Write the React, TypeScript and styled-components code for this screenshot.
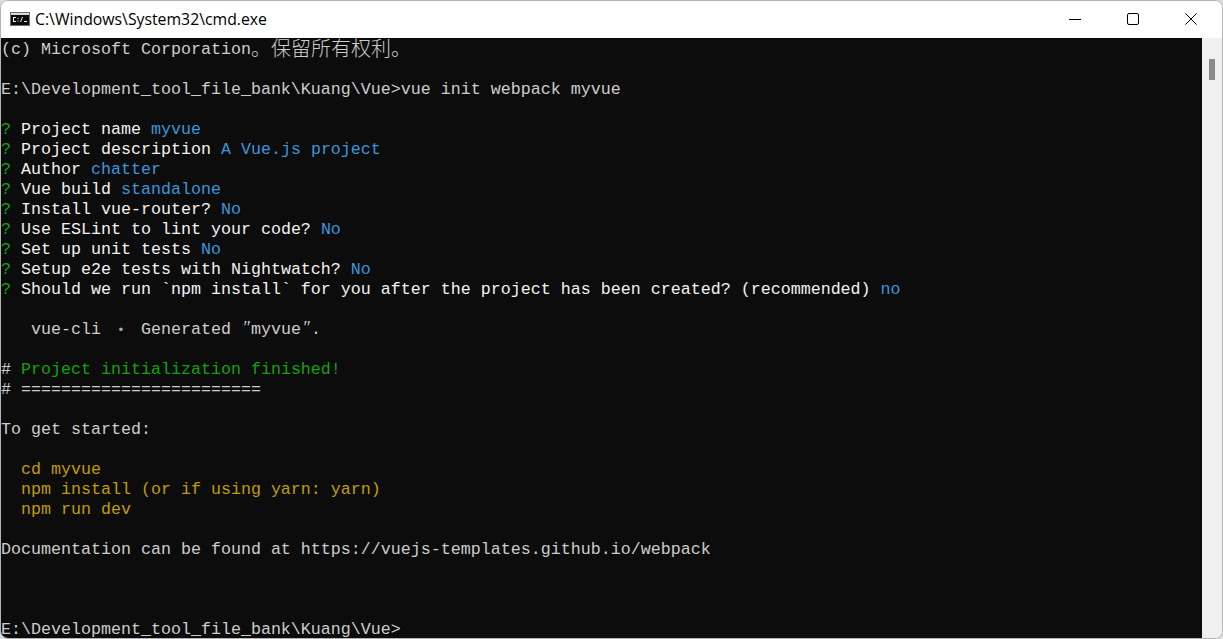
import React from "react";
import styled, { createGlobalStyle } from "styled-components";

const Global = createGlobalStyle`
  html, body { margin: 0; padding: 0; height: 100%; background: #dcdcdc; overflow: hidden; }
  #root { height: 100%; }
`;

const Window = styled.div`
  box-sizing: border-box;
  width: 1223px;
  height: 639px;
  display: flex;
  flex-direction: column;
  border: 1px solid #b4b4b4;
  border-radius: 8px;
  overflow: hidden;
  background: #fff;
`;

const TitleBar = styled.header`
  flex: 0 0 37px;
  display: flex;
  align-items: center;
  background: #fff;
  padding-left: 9px;
  padding-right: 2px;
`;

const AppIcon = styled.svg`
  width: 20px;
  height: 14px;
  flex: none;
  margin-top: -1px;
`;

const Title = styled.div`
  margin-left: 5px;
  font: 15.8px/20px "Open Sans", "Liberation Sans", sans-serif;
  color: #000;
  flex: 1;
  margin-top: -1px;
`;

const Caption = styled.button`
  width: 58px;
  height: 37px;
  padding: 0 0 1px;
  border: 0;
  background: none;
  display: flex;
  align-items: center;
  justify-content: center;
`;

const Body = styled.main`
  flex: 1;
  min-height: 0;
  display: flex;
`;

const Terminal = styled.section`
  flex: 1;
  min-width: 0;
  background: #0c0c0c;
  padding-top: 1px;
`;

const Row = styled.div`
  height: 20px;
  line-height: 22px;
  white-space: pre;
  font-family: "Liberation Mono", "Noto Sans CJK SC", monospace;
  font-size: 16.667px;
  color: #cccccc;
`;

const tones: Record<string, string> = {
  plain: "#cccccc",
  bright: "#f2f2f2",
  green: "#13a10e",
  cyan: "#3a96dd",
  yellow: "#c19c00",
};

const Seg = styled.span<{ $tone: string }>`
  color: ${(p) => tones[p.$tone]};
`;

const Cjk = styled.span`
  display: inline-block;
  height: 20px;
  margin-top: -1px;
  font-family: "Noto Sans CJK SC", sans-serif;
  font-size: 20px;
  font-weight: 300;
  line-height: 20px;
  vertical-align: top;
`;

const Bullet = styled.span`
  display: inline-block;
  width: 20px;
  line-height: 0;
  text-align: center;
  font-size: 13px;
  color: #a8a8a8;
`;

const Quote = styled.span`
  display: inline-block;
  width: 10px;
  line-height: 0;
  text-align: center;
  font-family: "Liberation Serif", serif;
  font-style: italic;
  font-size: 18px;
`;

const Scrollbar = styled.aside`
  flex: 0 0 20px;
  background: #f0f0f0;
  padding: 21px 0 0 7px;
  box-sizing: border-box;
`;

const Thumb = styled.div`
  width: 6px;
  height: 21px;
  background: #8b8b8b;
`;

type S = [string, string];
const P = (t: string): S => ["green", t];
const q = (label: string, value: string): S[] => [
  ["green", "? "],
  ["bright", label + " "],
  ["cyan", value],
];

const rows: S[][] = [
  [],
  [],
  [["plain", "E:\\Development_tool_file_bank\\Kuang\\Vue>vue init webpack myvue"]],
  [],
  q("Project name", "myvue"),
  q("Project description", "A Vue.js project"),
  q("Author", "chatter"),
  q("Vue build", "standalone"),
  q("Install vue-router?", "No"),
  q("Use ESLint to lint your code?", "No"),
  q("Set up unit tests", "No"),
  q("Setup e2e tests with Nightwatch?", "No"),
  q("Should we run `npm install` for you after the project has been created? (recommended)", "no"),
  [],
  [],
  [],
  [["plain", "# "], P("Project initialization finished!")],
  [["plain", "# ========================"]],
  [],
  [["plain", "To get started:"]],
  [],
  [["yellow", "  cd myvue"]],
  [["yellow", "  npm install (or if using yarn: yarn)"]],
  [["yellow", "  npm run dev"]],
  [],
  [["plain", "Documentation can be found at https://vuejs-templates.github.io/webpack"]],
  [],
  [],
  [],
  [["plain", "E:\\Development_tool_file_bank\\Kuang\\Vue>"]],
];

export default function App() {
  return (
    <>
      <Global />
      <Window>
        <TitleBar>
          <AppIcon viewBox="0 0 20 14">
            <rect width="20" height="14" fill="#6e6e6e" />
            <rect x="1" y="1" width="18" height="2" fill="#d8d8d8" />
            <rect x="1" y="3" width="18" height="10" fill="#0c0c0c" />
            <path d="M3 5h3v1H4v3h2v1H3zM7.500 6h1v1h-1zM7.500 8.500h1v1h-1zM10 10l2-5h1l-2 5zM14 9h3v1h-3z" fill="#f0f0f0" />
          </AppIcon>
          <Title>C:\Windows\System32\cmd.exe</Title>
          <Caption aria-label="Minimize">
            <svg width="12" height="12" viewBox="0 0 12 12"><path d="M0 6.500h12" stroke="#000" strokeWidth="1" /></svg>
          </Caption>
          <Caption aria-label="Maximize">
            <svg width="12" height="12" viewBox="0 0 12 12"><rect x=".5" y=".5" width="11" height="11" rx="1.500" fill="none" stroke="#000" /></svg>
          </Caption>
          <Caption aria-label="Close">
            <svg width="12" height="12" viewBox="0 0 12 12"><path d="M.4.400 11.600 11.600M11.600.400.4 11.600" stroke="#000" strokeWidth="1" fill="none" /></svg>
          </Caption>
        </TitleBar>
        <Body>
          <Terminal>
            {rows.map((r, i) => {
              if (i === 0) {
                return (
                  <Row key={i}>
                    (c) Microsoft Corporation<Cjk>。保留所有权利。</Cjk>
                  </Row>
                );
              }
              if (i === 14) {
                return (
                  <Row key={i}>
                    {"   vue-cli "}
                    <Bullet>•</Bullet>
                    {" Generated "}
                    <Quote>″</Quote>
                    myvue
                    <Quote>″</Quote>.
                  </Row>
                );
              }
              return (
                <Row key={i}>
                  {r.map((s, j) => (
                    <Seg key={j} $tone={s[0]}>{s[1]}</Seg>
                  ))}
                </Row>
              );
            })}
          </Terminal>
          <Scrollbar>
            <Thumb />
          </Scrollbar>
        </Body>
      </Window>
    </>
  );
}
